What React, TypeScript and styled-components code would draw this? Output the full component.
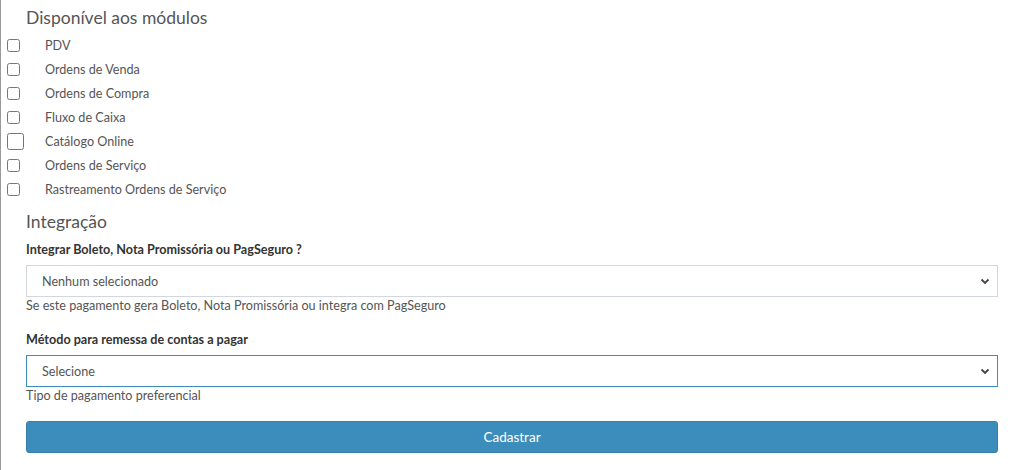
import React from 'react'
import styled, { createGlobalStyle } from 'styled-components'

const Global = createGlobalStyle`
  html, body { margin: 0; padding: 0; background: #fff; }
  body { font-family: Lato, "Liberation Sans", sans-serif; color: #333; }
`

const Page = styled.div`
  border-left: 1px solid #9a9a9a;
  min-height: 470px;
  box-sizing: border-box;
  padding: 6px 26px 0 25px;
`

const Heading = styled.h4`
  font-size: 17.5px;
  font-weight: 400;
  color: #555;
  margin: 0;
  line-height: 24px;
`

const CheckList = styled.div`
  margin: 3px 0 9px;
`

const CheckRow = styled.label`
  display: flex;
  align-items: center;
  height: 24px;
  font-size: 12.6px;
  color: #555;
  position: relative;
`

const Box = styled.input<{ $big?: boolean }>`
  position: absolute;
  left: -19px;
  width: ${p => (p.$big ? '17px' : '13px')};
  height: ${p => (p.$big ? '17px' : '13px')};
  margin: 0;
`

const CheckText = styled.span`
  padding-left: 19px;
`

const Label = styled.div<{ $gap?: number }>`
  font-size: 12.6px;
  font-weight: 700;
  color: #333;
  margin: ${p => p.$gap ?? 7}px 0 6px;
  line-height: 18px;
`

const Select = styled.div<{ $focus?: boolean }>`
  height: 32px;
  box-sizing: border-box;
  border: 1px solid ${p => (p.$focus ? '#3c8dbc' : '#d2d6de')};
  display: flex;
  align-items: center;
  justify-content: space-between;
  padding: 0 7px 0 15px;
  font-size: 12.6px;
  color: #555;
`

const Help = styled.div`
  font-size: 12.6px;
  color: #555;
  margin-top: 0;
  line-height: 18px;
`

const Button = styled.button`
  display: block;
  width: 100%;
  height: 32px;
  margin-top: 16px;
  border: 1px solid #367fa9;
  border-radius: 3px;
  background: #3c8dbc;
  color: #fff;
  font-family: inherit;
  font-size: 13.5px;
`

const Chevron = () => (
  <svg width="10" height="10" viewBox="0 0 10 10">
    <path d="M1.5 3.5 L5 7 L8.5 3.5" fill="none" stroke="#444" strokeWidth="1.8" />
  </svg>
)

const modules = [
  'PDV',
  'Ordens de Venda',
  'Ordens de Compra',
  'Fluxo de Caixa',
  'Catálogo Online',
  'Ordens de Serviço',
  'Rastreamento Ordens de Serviço',
]

export default function App() {
  return (
    <Page>
      <Global />
      <Heading>Disponível aos módulos</Heading>
      <CheckList>
        {modules.map(m => (
          <CheckRow key={m}>
            <Box type="checkbox" $big={m === 'Catálogo Online'} />
            <CheckText>{m}</CheckText>
          </CheckRow>
        ))}
      </CheckList>
      <Heading>Integração</Heading>
      <Label>Integrar Boleto, Nota Promissória ou PagSeguro ?</Label>
      <Select>
        <span>Nenhum selecionado</span>
        <Chevron />
      </Select>
      <Help>Se este pagamento gera Boleto, Nota Promissória ou integra com PagSeguro</Help>
      <Label $gap={16}>Método para remessa de contas a pagar</Label>
      <Select $focus>
        <span>Selecione</span>
        <Chevron />
      </Select>
      <Help>Tipo de pagamento preferencial</Help>
      <Button>Cadastrar</Button>
    </Page>
  )
}
